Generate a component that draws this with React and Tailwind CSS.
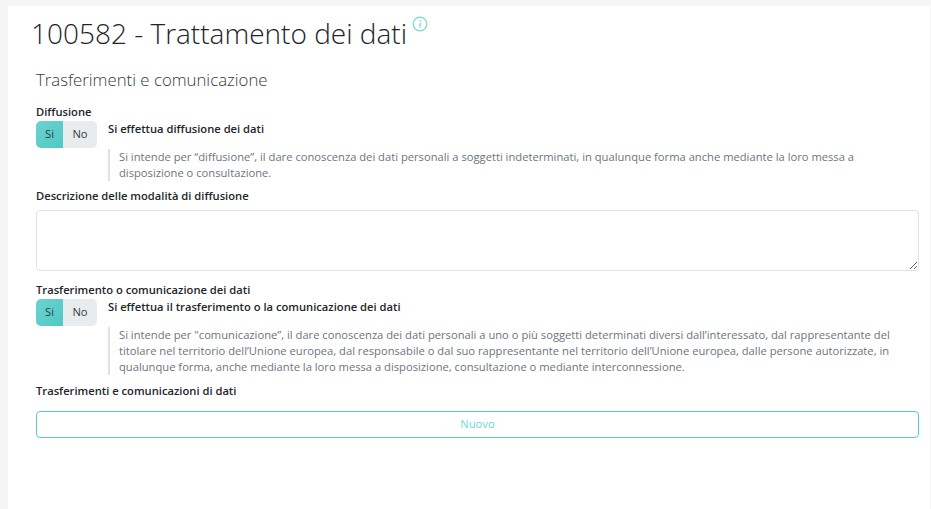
const Toggle = () => (
  <div className="flex w-[61px] h-[27px] shrink-0 rounded-[5px] overflow-hidden text-[11.2px] text-[#343a40]">
    <span className="w-[27px] flex items-center justify-center bg-gradient-to-br from-[#6ad3cf] to-[#4ec9c5]">Si</span>
    <span className="flex-1 flex items-center justify-center bg-[#e9ecef]">No</span>
  </div>
);

const Label = ({ className = '', children }) => (
  <div className={`text-[11.2px] leading-[15px] font-semibold text-[#212529] ${className}`}>{children}</div>
);

const Switch = ({ title, children }) => (
  <div className="flex gap-[11px] mt-[2px]">
    <Toggle />
    <div className="flex-1 min-w-0">
      <Label>{title}</Label>
      <div className="mt-[13px] border-l-2 border-[#dee2e6] pl-[9px] text-[11.2px] leading-[16px] text-[#6c757d]">
        {children}
      </div>
    </div>
  </div>
);

export default function App() {
  return (
    <div className="h-[509px] overflow-hidden bg-[#f5f5f5] pt-[6px] pl-[8px] pr-px font-['Open_Sans',sans-serif]">
      <div className="h-full bg-white pl-[23px] pt-[7px]">
        <div className="flex items-start">
          <h1 className="text-[28px] leading-[40px] font-light text-[#212529]">100582 - Trattamento dei dati</h1>
          <svg viewBox="0 0 16 16" className="w-[16px] h-[16px] ml-[5px] mt-[3px] text-[#6fd8d5]" fill="none" stroke="currentColor">
            <circle cx="8" cy="8" r="6.8" strokeWidth="1.2" />
            <path d="M8.3 6.8 7.7 11.6M8.4 4.2v1.2" strokeWidth="1.3" />
          </svg>
        </div>
        <div className="pl-[5px] pr-[11px]">
          <h2 className="mt-[16px] text-[16.8px] leading-[22px] font-light text-[#343a40]">Trasferimenti e comunicazione</h2>

          <Label className="mt-[13px]">Diffusione</Label>
          <Switch title="Si effettua diffusione dei dati">
            Si intende per “diffusione”, il dare conoscenza dei dati personali a soggetti indeterminati, in qualunque forma anche mediante la loro messa a disposizione o consultazione.
          </Switch>

          <Label className="mt-[7px]">Descrizione delle modalità di diffusione</Label>
          <textarea className="block mt-[7px] w-full h-[61px] border border-[#dee2e6] rounded-[4px] bg-white" />

          <Label className="mt-[11px]">Trasferimento o comunicazione dei dati</Label>
          <Switch title="Si effettua il trasferimento o la comunicazione dei dati">
            Si intende per "comunicazione”, il dare conoscenza dei dati personali a uno o più soggetti determinati diversi dall’interessato, dal rappresentante del titolare nel territorio dell’Unione europea, dal responsabile o dal suo rappresentante nel territorio dell’Unione europea, dalle persone autorizzate, in qualunque forma, anche mediante la loro messa a disposizione, consultazione o mediante interconnessione.
          </Switch>

          <Label className="mt-[8px]">Trasferimenti e comunicazioni di dati</Label>
          <button className="block mt-[13px] w-full h-[27px] border border-[#55cdc9] rounded-[4px] bg-white text-[11.2px] text-[#6fd8d5]">Nuovo</button>
        </div>
      </div>
    </div>
  );
}
